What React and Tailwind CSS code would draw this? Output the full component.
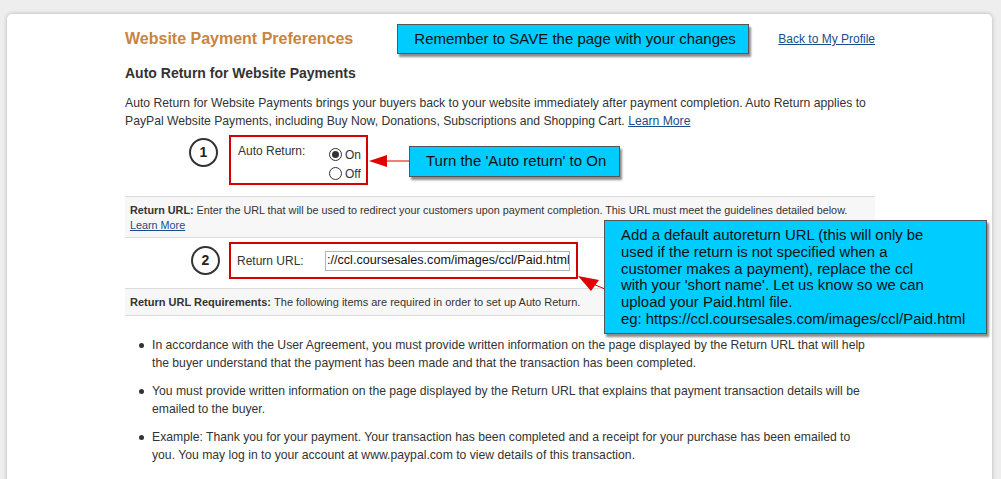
import React from 'react';

const font = { fontFamily: '"Liberation Sans", Arial, sans-serif' };

const StepCircle = ({ n, className }) => (
  <div className={`w-[29px] h-[29px] rounded-full border-2 border-[#333] bg-white flex items-center justify-center text-[14px] font-bold text-[#222] ${className}`}>
    {n}
  </div>
);

const Radio = ({ checked, label }) => (
  <div className="flex items-center h-[19px]">
    <span className="w-[13px] h-[13px] rounded-full border border-[#333] bg-white flex items-center justify-center">
      {checked && <span className="w-[7px] h-[7px] rounded-full bg-[#333]" />}
    </span>
    <span className="ml-[3px] text-[12px] text-[#333]">{label}</span>
  </div>
);

const Bullet = ({ children }) => (
  <li className="flex">
    <span className="w-[5px] h-[5px] rounded-full bg-[#333] ml-[14px] mt-[7px] shrink-0" />
    <p className="ml-[8px] text-[12.2px] leading-[18px] text-[#333] whitespace-nowrap">{children}</p>
  </li>
);

export default function App() {
  return (
    <div className="h-[479px] overflow-hidden bg-[#eeeeee] pt-[14px] pl-[7px]" style={font}>
      <div className="relative w-[985px] h-[480px] bg-white rounded-[5px] shadow-[0_0_4px_rgba(0,0,0,0.25)] pl-[118px] pt-[10px]">
        {/* header */}
        <div className="flex items-center h-[30px] w-[750px]">
          <h1 className="w-[274px] text-[16px] font-bold text-[#c9843f]">Website Payment Preferences</h1>
          <div className="w-[352px] h-[30px] shrink-0 bg-[#00ccff] border border-[#555] shadow-[2px_3px_2px_rgba(0,0,0,0.45)] flex items-center pl-[16px] text-[15px] text-[#111]">
            Remember to SAVE the page with your changes
          </div>
          <a href="#" className="ml-[29px] text-[12px] text-[#1b4c8c] underline whitespace-nowrap">Back to My Profile</a>
        </div>

        <h2 className="mt-[10px] text-[14px] leading-[18px] font-bold text-[#333]">Auto Return for Website Payments</h2>

        <p className="mt-[12px] text-[12.2px] leading-[18px] text-[#333] whitespace-nowrap">
          Auto Return for Website Payments brings your buyers back to your website immediately after payment completion. Auto Return applies to
          <br />
          PayPal Website Payments, including Buy Now, Donations, Subscriptions and Shopping Cart.{' '}
          <a href="#" className="text-[#1b4c8c] underline">Learn More</a>
        </p>

        {/* step 1 */}
        <div className="relative mt-[5px] flex w-[750px]">
          <StepCircle n="1" className="ml-[64px] mt-[3px]" />
          <div className="ml-[11px] w-[139px] h-[50px] border-2 border-[#d40000] flex pl-[7px] pt-[7px]">
            <span className="text-[12px] leading-[15px] text-[#333] w-[91px]">Auto Return:</span>
            <div className="flex flex-col mt-[1px]">
              <Radio checked label="On" />
              <Radio label="Off" />
            </div>
          </div>
          <svg className="absolute left-[243px] top-[19px]" width="42" height="14" viewBox="0 0 42 14">
            <line x1="16" y1="7" x2="42" y2="7" stroke="#e00000" strokeWidth="1" />
            <polygon points="1,7 19,1 19,13" fill="#e00000" />
          </svg>
          <div className="absolute left-[284px] top-[11px] w-[211px] h-[31px] bg-[#00ccff] border border-[#555] shadow-[2px_3px_2px_rgba(0,0,0,0.45)] flex items-center pl-[16px] text-[15px] text-[#111]">
            Turn the 'Auto return' to On
          </div>
        </div>

        {/* return url band */}
        <div className="mt-[11px] w-[750px] bg-[#f7f7f7] border-y border-[#dcdcdc] pl-[5px] pt-[6px] pb-[4px] text-[10.8px] leading-[15px] text-[#333] whitespace-nowrap">
          <span className="font-bold">Return URL:</span> Enter the URL that will be used to redirect your customers upon payment completion. This URL must meet the guidelines detailed below.
          <br />
          <a href="#" className="text-[#1b4c8c] underline">Learn More</a>
        </div>

        {/* step 2 */}
        <div className="mt-[4px] flex items-center">
          <StepCircle n="2" className="ml-[66px]" />
          <div className="ml-[9px] w-[349px] h-[37px] border-2 border-[#d40000] flex items-center pl-[6px]">
            <span className="w-[88px] text-[12px] text-[#333]">Return URL:</span>
            <div className="w-[245px] h-[20px] border border-[#a9b5c4] bg-white overflow-hidden flex items-center pl-[1px] text-[12.6px] text-[#111] whitespace-nowrap">
              ://ccl.coursesales.com/images/ccl/Paid.html
            </div>
          </div>
        </div>

        {/* requirements band */}
        <div className="mt-[9px] w-[750px] h-[28px] bg-[#f7f7f7] border-y border-[#dcdcdc] pl-[5px] flex items-center text-[11px] text-[#333]">
          <span className="font-bold">Return URL Requirements:</span>&nbsp;The following items are required in order to set up Auto Return.
        </div>

        <ul className="mt-[20px] flex flex-col gap-[10px]">
          <Bullet>
            In accordance with the User Agreement, you must provide written information on the page displayed by the Return URL that will help
            <br />
            the buyer understand that the payment has been made and that the transaction has been completed.
          </Bullet>
          <Bullet>
            You must provide written information on the page displayed by the Return URL that explains that payment transaction details will be
            <br />
            emailed to the buyer.
          </Bullet>
          <Bullet>
            Example: Thank you for your payment. Your transaction has been completed and a receipt for your purchase has been emailed to
            <br />
            you. You may log in to your account at www.paypal.com to view details of this transaction.
          </Bullet>
        </ul>

        {/* callout 2 */}
        <svg className="absolute left-[570px] top-[246px]" width="36" height="34" viewBox="0 0 36 34">
          <line x1="16" y1="24" x2="35" y2="32" stroke="#e00000" strokeWidth="1" />
          <polygon points="1,16 22,20 14,31" fill="#e00000" />
        </svg>
        <div className="absolute left-[597px] top-[206px] w-[383px] h-[114px] bg-[#00ccff] border border-[#555] shadow-[2px_3px_2px_rgba(0,0,0,0.45)] pl-[16px] pt-[6px] text-[14.9px] leading-[16.8px] text-[#111] whitespace-nowrap">
          Add a default autoreturn URL (this will only be
          <br />
          used if the return is not specified when a
          <br />
          customer makes a payment), replace the ccl
          <br />
          with your 'short name'. Let us know so we can
          <br />
          upload your Paid.html file.
          <br />
          eg: https://ccl.coursesales.com/images/ccl/Paid.html
        </div>
      </div>
    </div>
  );
}
